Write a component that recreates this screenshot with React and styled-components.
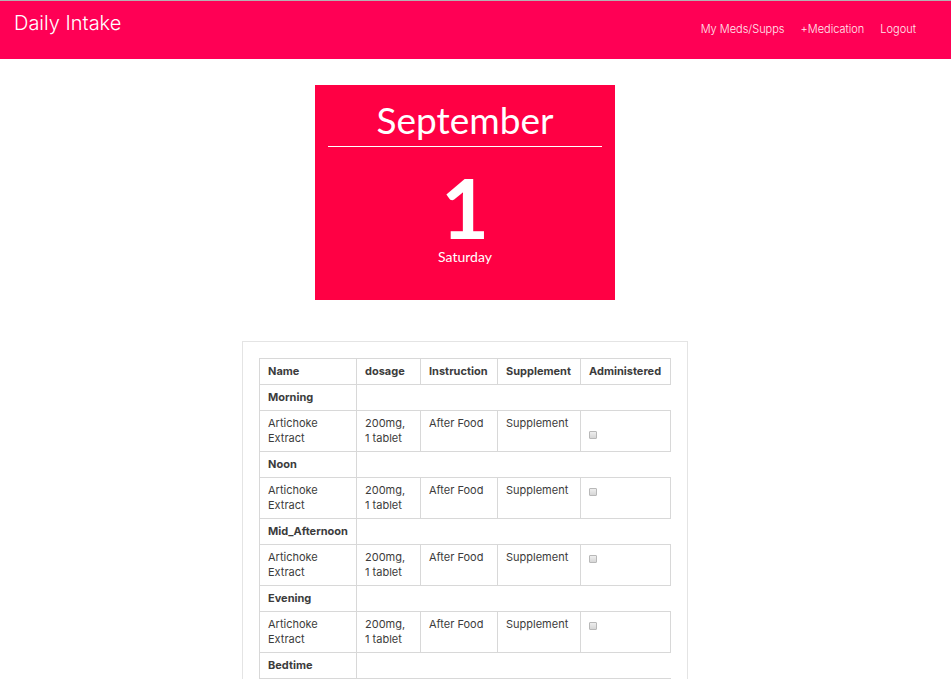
import React, { Fragment } from "react";
import styled, { createGlobalStyle } from "styled-components";

const GlobalStyle = createGlobalStyle`
  *, *::before, *::after { box-sizing: border-box; }
  body {
    margin: 0;
    background: #fff;
    color: #3c3c3c;
    font-family: Inter, "Liberation Sans", sans-serif;
    font-size: 11px;
    line-height: 15px;
  }
`;

const Page = styled.div`
  height: 100vh;
  overflow: hidden;
`;

const Header = styled.header`
  display: flex;
  justify-content: space-between;
  align-items: flex-start;
  min-height: 59px;
  padding: 0 35px 0 14px;
  border-top: 1px solid #b4b0b2;
  background: #ff0055;
  color: #fff;
`;

const Brand = styled.a`
  padding-top: 10px;
  color: inherit;
  font-size: 20px;
  font-weight: 300;
  line-height: 24px;
  text-decoration: none;
`;

const Nav = styled.nav`
  display: flex;
  gap: 16px;
  padding-top: 21px;
`;

const NavLink = styled.a`
  color: #ffe9f0;
  font-weight: 300;
  text-decoration: none;
`;

const Main = styled.main`
  display: flex;
  flex-direction: column;
  align-items: center;
  gap: 41px;
  padding: 26px 21px 0 0;
`;

const Calendar = styled.section`
  display: flex;
  flex-direction: column;
  align-items: center;
  width: 300px;
  padding: 12px 13px 35px;
  background: #ff0044;
  color: #fff;
  font-family: Lato, sans-serif;
`;

const Month = styled.h1`
  width: 100%;
  margin: 0;
  padding-bottom: 3px;
  border-bottom: 1px solid #fff;
  font-size: 37px;
  font-weight: 400;
  line-height: 46px;
  text-align: center;
`;

const Day = styled.div`
  padding-top: 19px;
  font-size: 83px;
  font-weight: 700;
  line-height: 83px;
`;

const Weekday = styled.div`
  font-size: 14px;
  line-height: 16px;
`;

const Card = styled.section`
  width: 446px;
  padding: 16px;
  border: 1px solid #e4e4e4;
`;

const Table = styled.table`
  width: 100%;
  table-layout: fixed;
  border-collapse: collapse;
`;

const Column = styled.col`
  width: ${(p) => p.$width}px;
`;

const HeadCell = styled.th`
  padding: 5px 0 5px 8px;
  border: 1px solid #d8d8d8;
  font-weight: 700;
  text-align: left;
`;

const Cell = styled.td`
  padding: 5px 8px;
  border: 1px solid #d8d8d8;
  vertical-align: top;
`;

const CheckCell = styled(Cell)`
  padding-top: ${(p) => (p.$lowered ? 20 : 10)}px;
  padding-bottom: 0;
`;

const SpanCell = styled.td`
  border-bottom: 1px solid #d8d8d8;
`;

const Checkbox = styled.input`
  appearance: none;
  display: block;
  width: 8px;
  height: 8px;
  margin: 0;
  border: 1px solid #b8b8b8;
  border-radius: 1px;
  background: linear-gradient(#eee, #d6d6d6);

  &:checked { background: #ff0055; }
`;

const columns = [
  { label: "Name", width: 97 },
  { label: "dosage", width: 64 },
  { label: "Instruction", width: 77 },
  { label: "Supplement", width: 83 },
  { label: "Administered", width: 90 },
];

const item = {
  name: "Artichoke Extract",
  dosage: "200mg,",
  amount: "1 tablet",
  instruction: "After Food",
  kind: "Supplement",
};

const groups = [
  { time: "Morning", items: [item] },
  { time: "Noon", items: [item] },
  { time: "Mid_Afternoon", items: [item] },
  { time: "Evening", items: [item] },
  { time: "Bedtime", items: [] },
];

export default function App() {
  return (
    <Page>
      <GlobalStyle />
      <Header>
        <Brand href="#">Daily Intake</Brand>
        <Nav>
          <NavLink href="#meds">My Meds/Supps</NavLink>
          <NavLink href="#add">+Medication</NavLink>
          <NavLink href="#logout">Logout</NavLink>
        </Nav>
      </Header>
      <Main>
        <Calendar>
          <Month>September</Month>
          <Day>1</Day>
          <Weekday>Saturday</Weekday>
        </Calendar>
        <Card>
          <Table>
            <colgroup>
              {columns.map((c) => <Column key={c.label} $width={c.width} />)}
            </colgroup>
            <thead>
              <tr>
                {columns.map((c) => <HeadCell key={c.label} scope="col">{c.label}</HeadCell>)}
              </tr>
            </thead>
            <tbody>
              {groups.map((group, index) => (
                <Fragment key={group.time}>
                  <tr>
                    <HeadCell scope="row">{group.time}</HeadCell>
                    {group.items.length === 0 && <SpanCell colSpan={4} />}
                  </tr>
                  {group.items.map((entry) => (
                    <tr key={entry.name}>
                      <Cell>{entry.name}</Cell>
                      <Cell>{entry.dosage}<br />{entry.amount}</Cell>
                      <Cell>{entry.instruction}</Cell>
                      <Cell>{entry.kind}</Cell>
                      <CheckCell $lowered={index === 0}>
                        <Checkbox type="checkbox" aria-label={`${entry.name} administered, ${group.time}`} />
                      </CheckCell>
                    </tr>
                  ))}
                </Fragment>
              ))}
            </tbody>
          </Table>
        </Card>
      </Main>
    </Page>
  );
}
